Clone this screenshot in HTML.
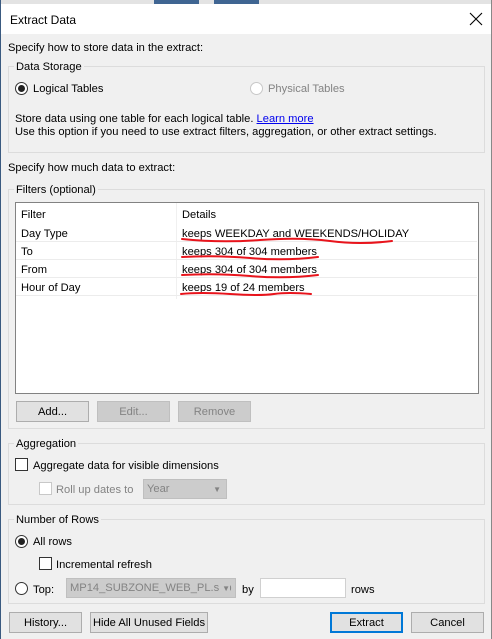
<!DOCTYPE html>
<html><head><style>
*{margin:0;padding:0;box-sizing:border-box}
body{width:492px;height:639px;overflow:hidden;background:#f0f0f0;font-family:"Liberation Sans",sans-serif;font-size:11.15px;color:#000;position:relative}
.a{position:absolute;white-space:nowrap}
.gb{position:absolute;border:1px solid #dcdcdc}
.lg{position:absolute;background:#f0f0f0;padding:0 2px;line-height:14px;top:1px}
.rad{position:absolute;width:13px;height:13px;border:1px solid #333;border-radius:50%;background:#fff}
.rad.on::after{content:"";position:absolute;left:2px;top:2px;width:7px;height:7px;border-radius:50%;background:#222}
.cb{position:absolute;width:13px;height:13px;border:1px solid #333;background:#fff}
.btn{position:absolute;height:21px;border:1px solid #adadad;background:#e1e1e1;text-align:center;line-height:20px;overflow:hidden}
.dis{color:#838383;border-color:#bfbfbf;background:#cccccc}
.t{line-height:14px;margin-top:1px}
</style></head><body>
<div class="a" style="left:0;top:0;width:492px;height:4px;background:#e3e3e3"></div>
<div class="a" style="left:154px;top:0;width:45px;height:4px;background:#3f6592"></div>
<div class="a" style="left:214px;top:0;width:45px;height:4px;background:#3f6592"></div>
<div class="a" style="left:0;top:4px;width:492px;height:30px;background:#fff"></div>
<div class="a" style="left:0;top:0;width:1px;height:639px;background:#3a5a80"></div>
<div class="a" style="left:491px;top:0;width:1px;height:639px;background:#888"></div>
<div class="a t" style="left:10px;top:12px;font-size:12px">Extract Data</div>
<svg class="a" style="left:469px;top:12px" width="14" height="14"><path d="M1 1L13 13M13 1L1 13" stroke="#000" stroke-width="1.1"/></svg>

<div class="a t" style="left:8px;top:40px">Specify how to store data in the extract:</div>
<div class="gb" style="left:8px;top:66px;width:477px;height:87px"></div>
<div class="lg" style="left:14px;top:60px">Data Storage</div>
<div class="rad on" style="left:15px;top:82px"></div>
<div class="a t" style="left:33px;top:81px">Logical Tables</div>
<div class="rad" style="left:250px;top:82px;border-color:#c8c8c8"></div>
<div class="a t" style="left:268px;top:81px;color:#838383">Physical Tables</div>
<div class="a t" style="left:15px;top:111px">Store data using one table for each logical table. <span style="color:#0000ee;text-decoration:underline">Learn more</span></div>
<div class="a t" style="left:15px;top:124px">Use this option if you need to use extract filters, aggregation, or other extract settings.</div>

<div class="a t" style="left:8px;top:160px">Specify how much data to extract:</div>
<div class="gb" style="left:8px;top:189px;width:477px;height:240px"></div>
<div class="lg" style="left:14px;top:183px">Filters (optional)</div>
<div class="a" style="left:15px;top:202px;width:464px;height:192px;background:#fff;border:1px solid #828282"></div>
<div class="a" style="left:176px;top:203px;width:1px;height:96px;background:#f0f0f0"></div>
<div class="a" style="left:16px;top:241px;width:461px;height:1px;background:#ececec"></div>
<div class="a" style="left:16px;top:259px;width:461px;height:1px;background:#ececec"></div>
<div class="a" style="left:16px;top:277px;width:461px;height:1px;background:#ececec"></div>
<div class="a" style="left:16px;top:295px;width:461px;height:1px;background:#ececec"></div>
<div class="a t" style="left:21px;top:207px">Filter</div>
<div class="a t" style="left:182px;top:207px">Details</div>
<div class="a t" style="left:21px;top:226px">Day Type</div>
<div class="a t" style="left:182px;top:226px">keeps WEEKDAY and WEEKENDS/HOLIDAY</div>
<div class="a t" style="left:21px;top:244px">To</div>
<div class="a t" style="left:182px;top:244px">keeps 304 of 304 members</div>
<div class="a t" style="left:21px;top:262px">From</div>
<div class="a t" style="left:182px;top:262px">keeps 304 of 304 members</div>
<div class="a t" style="left:21px;top:280px">Hour of Day</div>
<div class="a t" style="left:182px;top:280px">keeps 19 of 24 members</div>
<svg class="a" style="left:0;top:0" width="492" height="320">
<g fill="none" stroke="#e8141c" stroke-width="2" stroke-linecap="round">
<path d="M182 239Q220 243 260 240T330 241T392 241"/>
<path d="M182 257Q215 255 250 258T318 257"/>
<path d="M182 275Q215 273 250 276T318 275"/>
<path d="M181 294Q200 292 230 294T274 294T311 294"/>
</g></svg>
<div class="btn" style="left:16px;top:401px;width:73px">Add...</div>
<div class="btn dis" style="left:97px;top:401px;width:73px">Edit...</div>
<div class="btn dis" style="left:178px;top:401px;width:73px">Remove</div>

<div class="gb" style="left:8px;top:443px;width:477px;height:62px"></div>
<div class="lg" style="left:14px;top:437px">Aggregation</div>
<div class="cb" style="left:15px;top:458px"></div>
<div class="a t" style="left:33px;top:458px">Aggregate data for visible dimensions</div>
<div class="cb" style="left:39px;top:482px;border-color:#c8c8c8"></div>
<div class="a t" style="left:56px;top:482px;color:#838383">Roll up dates to</div>
<div class="a" style="left:143px;top:479px;width:84px;height:20px;background:#cccccc;border:1px solid #bfbfbf;color:#838383;padding-left:3px;line-height:19px">Year<span style="position:absolute;right:5px;top:0;font-size:8px">▼</span></div>

<div class="gb" style="left:8px;top:519px;width:477px;height:85px"></div>
<div class="lg" style="left:14px;top:513px">Number of Rows</div>
<div class="rad on" style="left:15px;top:535px"></div>
<div class="a t" style="left:33px;top:534px">All rows</div>
<div class="cb" style="left:39px;top:557px"></div>
<div class="a t" style="left:56px;top:557px">Incremental refresh</div>
<div class="rad" style="left:15px;top:582px"></div>
<div class="a t" style="left:33px;top:582px">Top:</div>
<div class="a" style="left:66px;top:578px;width:170px;height:20px;background:#cccccc;border:1px solid #bfbfbf;color:#838383;padding-left:3px;line-height:19px;overflow:hidden">MP14_SUBZONE_WEB_PL.shp<span style="position:absolute;right:5px;top:0;font-size:8px;background:#ccc;padding-left:3px">▼</span></div>
<div class="a t" style="left:242px;top:582px">by</div>
<div class="a" style="left:260px;top:578px;width:86px;height:20px;background:#fff;border:1px solid #d0d0d0"></div>
<div class="a t" style="left:351px;top:582px">rows</div>

<div class="btn" style="left:9px;top:612px;width:73px">History...</div>
<div class="btn" style="left:90px;top:612px;width:118px">Hide All Unused Fields</div>
<div class="btn" style="left:330px;top:612px;width:73px;border:2px solid #0078d7;line-height:18px">Extract</div>
<div class="btn" style="left:411px;top:612px;width:73px">Cancel</div>
</body></html>
